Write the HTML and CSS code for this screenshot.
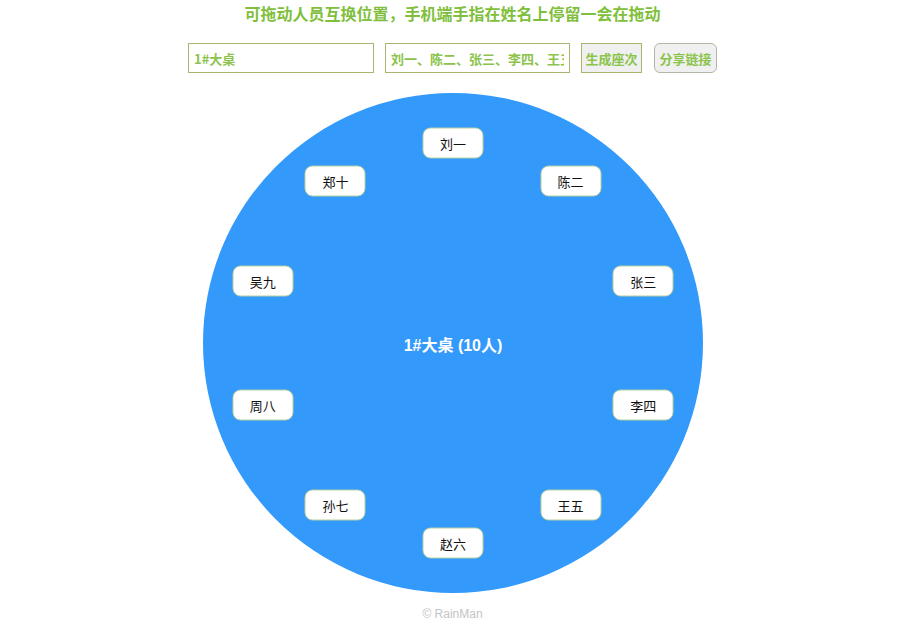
FILE: index.html
```html
<!DOCTYPE html>
<html lang="zh">
<head>
<meta charset="utf-8">
<title>座次</title>
<link rel="stylesheet" href="styles.css">
</head>
<body>
<h1 class="title">可拖动人员互换位置，手机端手指在姓名上停留一会在拖动</h1>
<div class="controls">
  <input class="field field-table" type="text" value="1#大桌">
  <input class="field field-names" type="text" value="刘一、陈二、张三、李四、王五、赵六、孙七、周八、吴九、郑十">
  <button class="btn btn-gen">生成座次</button>
  <button class="btn btn-share">分享链接</button>
</div>
<div class="table-wrap">
  <div class="table">
    <div class="table-label">1#大桌 (10人)</div>
    <div class="seat" style="left:250px;top:50px">刘一</div>
    <div class="seat" style="left:367.6px;top:88.2px">陈二</div>
    <div class="seat" style="left:440.2px;top:188.2px">张三</div>
    <div class="seat" style="left:440.2px;top:311.8px">李四</div>
    <div class="seat" style="left:367.6px;top:411.8px">王五</div>
    <div class="seat" style="left:250px;top:450px">赵六</div>
    <div class="seat" style="left:132.4px;top:411.8px">孙七</div>
    <div class="seat" style="left:59.8px;top:311.8px">周八</div>
    <div class="seat" style="left:59.8px;top:188.2px">吴九</div>
    <div class="seat" style="left:132.4px;top:88.2px">郑十</div>
  </div>
</div>
<div class="footer">© RainMan</div>
</body>
</html>
```
FILE: styles.css
```css
html, body {
  margin: 0;
  padding: 0;
  background: #ffffff;
}
body {
  font-family: "Noto Sans CJK SC", "Liberation Sans", sans-serif;
  width: 905px;
}
.title {
  margin: 0;
  padding-top: 3px;
  line-height: 20px;
  font-size: 16px;
  font-weight: bold;
  color: #80bf3c;
  text-align: center;
}
.controls {
  display: flex;
  justify-content: center;
  align-items: center;
  gap: 11px;
  margin-top: 20px;
  height: 30px;
}
.field {
  box-sizing: border-box;
  height: 30px;
  width: 186px;
  border: 1px solid #a9b46e;
  border-radius: 0;
  padding: 0 5px;
  font-family: "Noto Sans CJK SC", "Liberation Sans", sans-serif;
  font-size: 13px;
  font-weight: bold;
  color: #8cc34c;
  background: #fff;
  outline: none;
}
.field-names {
  width: 185px;
}
.btn {
  box-sizing: border-box;
  height: 30px;
  padding: 0;
  white-space: nowrap;
  font-family: "Noto Sans CJK SC", "Liberation Sans", sans-serif;
  font-size: 13px;
  font-weight: bold;
  color: #8cc34c;
  background: #f0f0f0;
  cursor: pointer;
}
.btn-gen {
  width: 61px;
  border: 1px solid #a9b46e;
  border-radius: 0;
}
.btn-share {
  width: 63px;
  border: 1px solid #b5b5a5;
  border-radius: 6px;
  margin-left: 1px;
}
.table-wrap {
  display: flex;
  justify-content: center;
  margin-top: 20px;
  padding-left: 1px;
}
.table {
  position: relative;
  width: 500px;
  height: 500px;
  border-radius: 50%;
  background: #3399fb;
  display: flex;
  align-items: center;
  justify-content: center;
}
.table-label {
  color: #ffffff;
  font-family: "Liberation Sans", "Noto Sans CJK SC", sans-serif;
  font-size: 16px;
  font-weight: bold;
  padding-top: 2px;
}
.seat {
  position: absolute;
  box-sizing: border-box;
  width: 61px;
  height: 31px;
  transform: translate(-50%, -50%);
  background: #ffffff;
  border: 1px solid #b9cfa0;
  border-radius: 8px;
  display: flex;
  align-items: center;
  justify-content: center;
  font-family: "Noto Sans CJK SC", sans-serif;
  font-size: 13px;
  font-weight: 400;
  color: #111;
  cursor: move;
}
.footer {
  margin-top: 14px;
  text-align: center;
  font-family: "Liberation Sans", Arial, sans-serif;
  font-size: 12px;
  line-height: 14px;
  color: #c4c4c4;
}
```
